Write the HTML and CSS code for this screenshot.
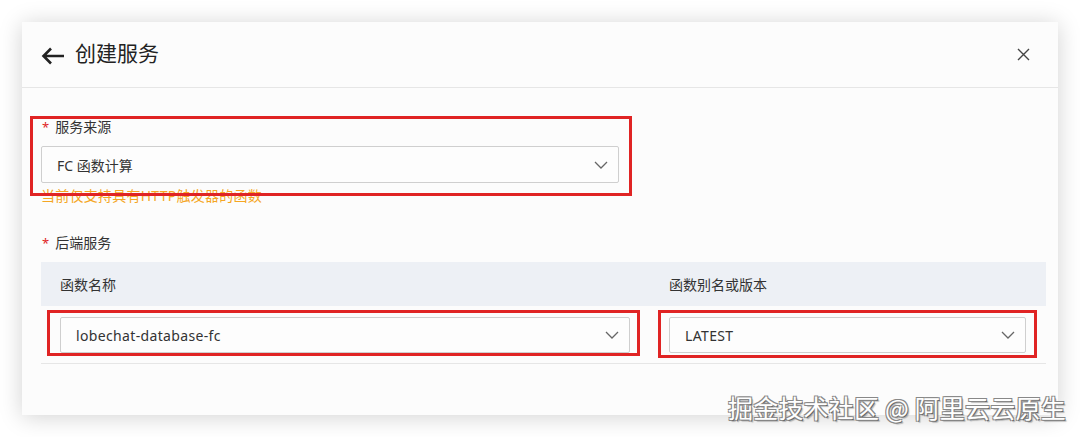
FILE: index.html
```html
<!DOCTYPE html>
<html>
  <head>
    <title>创建服务</title>
    <link rel="stylesheet" href="styles.css">
  </head>
  <body>

  <div class="panel">
    <div class="panel-header">
      <svg class="back-icon" width="24" height="18" viewBox="0 0 24 18">
        <path d="M23 9H3M10 1.5L2.5 9l7.5 7.5" fill="none" stroke="#222" stroke-width="2.6" stroke-linejoin="miter"/>
      </svg>
      <h1 class="panel-title">创建服务</h1>
      <svg class="close-icon" width="13" height="13" viewBox="0 0 13 13">
        <path d="M1 1l11 11M12 1L1 12" stroke="#444" stroke-width="1.4"/>
      </svg>
    </div>

    <div class="panel-body">
      <div class="form-item first">
        <div class="form-label"><span class="required">*</span>服务来源</div>
        <div class="select source-select">
          <span>FC 函数计算</span>
          <svg class="chevron" width="14" height="8" viewBox="0 0 14 8"><polyline points="1,1 7,7 13,1" fill="none" stroke="#666" stroke-width="1.3"/></svg>
        </div>
        <div class="form-help">当前仅支持具有HTTP触发器的函数</div>
      </div>

      <div class="form-item second">
        <div class="form-label"><span class="required">*</span>后端服务</div>
        <div class="table">
          <div class="table-head">
            <div class="col col-name">函数名称</div>
            <div class="col col-version">函数别名或版本</div>
          </div>
          <div class="table-row">
            <div class="col col-name">
              <div class="select row-select">
                <span>lobechat-database-fc</span>
                <svg class="chevron" width="14" height="8" viewBox="0 0 14 8"><polyline points="1,1 7,7 13,1" fill="none" stroke="#666" stroke-width="1.3"/></svg>
              </div>
            </div>
            <div class="col col-version">
              <div class="select row-select">
                <span>LATEST</span>
                <svg class="chevron" width="14" height="8" viewBox="0 0 14 8"><polyline points="1,1 7,7 13,1" fill="none" stroke="#666" stroke-width="1.3"/></svg>
              </div>
            </div>
          </div>
        </div>
      </div>
    </div>

    <!-- red annotation boxes drawn over the form -->
    <div class="mark mark-source"></div>
    <div class="mark mark-name"></div>
    <div class="mark mark-version"></div>
  </div>

  <div class="watermark">掘金技术社区 @ 阿里云云原生</div>

  </body>
</html>
```

FILE: styles.css
```css
body{
  margin: 0;
  background-color: white;
  font-family: "Noto Sans", "Noto Sans CJK SC", sans-serif;
  color: #333;
  width: 1080px;
  height: 437px;
  overflow: hidden;
  position: relative;
}

.panel{
  position: relative;
  margin: 22px 0 0 22px;
  width: 1036px;
  height: 393px;
  background-color: #fcfcfc;
  box-shadow: 0 2px 22px rgba(0, 0, 0, 0.18);
}

.panel-header{
  height: 66px;
  box-sizing: border-box;
  display: flex;
  align-items: center;
  padding: 0 28px 0 19px;
  border-bottom: 1px solid #e6e6e6;
}

.back-icon{
  margin-right: 10px;
  margin-top: 2px;
}

.panel-title{
  flex: 1;
  margin: 0;
  font-size: 21px;
  line-height: 28px;
  font-weight: normal;
  color: #222;
  margin-top: -4px;
}

.panel-body{
  padding: 0 12px 0 19px;
}

.form-item.first{
  padding-top: 29px;
}

.form-item.second{
  margin-top: 27px;
}

.form-label{
  font-size: 14px;
  line-height: 20px;
  height: 20px;
  color: #333;
  margin-bottom: 9px;
}

.required{
  color: #e02424;
  margin: 0 6px 0 1px;
  font-size: 13px;
}

.select{
  display: flex;
  align-items: center;
  justify-content: space-between;
  box-sizing: border-box;
  height: 36px;
  padding: 0 10px 0 15px;
  border: 1px solid #cfcfcf;
  border-radius: 2px;
  background-color: #fdfdfd;
  font-size: 14px;
  color: #333;
}

.row-select span{
  letter-spacing: 0.35px;
}

.source-select{
  width: 578px;
  height: 37px;
}

.form-help{
  margin-top: 3px;
  font-size: 14px;
  line-height: 20px;
  letter-spacing: 0.25px;
  color: #f5a623;
}

.table{
  width: 1005px;
}

.table-head{
  display: flex;
  height: 44px;
  align-items: center;
  background-color: #edf0f5;
  font-size: 14px;
  color: #333;
}

.table-row{
  display: flex;
  height: 58px;
  box-sizing: border-box;
  padding-top: 11px;
  border-bottom: 1px solid #e6e6e6;
}

.col-name{
  width: 610px;
  box-sizing: border-box;
  padding: 0 21px 0 19px;
}

.col-version{
  width: 395px;
  box-sizing: border-box;
  padding: 0 20px 0 18px;
}

.mark{
  position: absolute;
  box-sizing: border-box;
  border: 3px solid #e02424;
}

.mark-source{
  left: 8px;
  top: 94px;
  width: 602px;
  height: 80px;
}

.mark-name{
  left: 25px;
  top: 288px;
  width: 593px;
  height: 46px;
}

.mark-version{
  left: 636px;
  top: 288px;
  width: 379px;
  height: 48px;
}

.watermark{
  position: absolute;
  left: 728px;
  top: 391px;
  font-family: "Noto Sans CJK SC", sans-serif;
  font-size: 25px;
  line-height: 32px;
  letter-spacing: 0.2px;
  color: white;
  text-shadow: -1px -1px 0 #888, 1px -1px 0 #888, -1px 1px 0 #888, 1px 1px 0 #666, 2px 2px 1px rgba(0,0,0,0.25);
  white-space: nowrap;
}
```
